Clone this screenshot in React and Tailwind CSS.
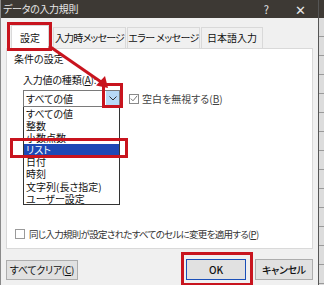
export default function App() {
  const items = ['すべての値', '整数', '小数点数', 'リスト', '日付', '時刻', '文字列(長さ指定)', 'ユーザー設定']

  return (
    <div className="relative flex w-[324px] h-[285px] overflow-hidden whitespace-nowrap bg-[#f0f0f0] font-['Noto_Sans_CJK_JP',sans-serif] [font-feature-settings:'palt'] text-[10px] leading-[12px] text-[#111]">
      {/* dialog */}
      <div className="flex flex-col w-[318px] h-full border-l border-[#8a8a8a]">
        {/* title bar */}
        <div className="flex items-center h-[18px] bg-[#3d3934] text-[#e8e8e8] pl-[2px] pr-[12px]">
          <span className="tracking-[-0.3px]">データの入力規則</span>
          <span className="ml-auto text-[11px]">?</span>
          <span className="ml-[26px] text-[13px] leading-[13px]">✕</span>
        </div>

        <div className="flex flex-col flex-1 px-[5px]">
          {/* tabs */}
          <div className="flex items-end h-[30px] pl-[5px]">
            <div className="flex items-center justify-center w-[38px] h-[24px] bg-white border border-b-0 border-[#d9d9d9] -mb-px z-10">設定</div>
            <div className="flex items-center justify-center w-[73px] h-[21px] ml-[4px] bg-[#f0f0f0] border border-b-0 border-[#d9d9d9] tracking-[-0.8px]">入力時メッセージ</div>
            <div className="flex items-center justify-center w-[73px] h-[21px] ml-[1px] bg-[#f0f0f0] border border-b-0 border-[#d9d9d9] tracking-[-0.6px]">エラー&nbsp;メッセージ</div>
            <div className="flex items-center justify-center w-[62px] h-[21px] ml-[1px] bg-[#f0f0f0] border border-b-0 border-[#d9d9d9]">日本語入力</div>
          </div>

          {/* panel */}
          <div className="flex flex-col h-[201px] bg-white border border-[#d9d9d9]">
            <div className="pl-[7px] pt-[4px]">条件の設定</div>
            <div className="pl-[16px] mt-[9px] tracking-[-0.2px]">
              入力値の種類(<span className="underline">A</span>):
            </div>
            <div className="flex items-start pl-[16px] mt-[4px]">
              <div className="flex flex-col w-[97px]">
                <div className="flex items-center h-[17px] border border-[#7a7a7a] pl-[2px]">
                  <span>すべての値</span>
                  <div className="ml-auto flex items-center justify-center w-[13px] h-full bg-[#b7daf7]">
                    <svg width="8" height="5" viewBox="0 0 8 5">
                      <path d="M0.5 0.5 L4 4 L7.5 0.5" fill="none" stroke="#333" strokeWidth="1" />
                    </svg>
                  </div>
                </div>
                <div className="flex flex-col h-[98px] border border-t-0 border-[#333] pt-[1px]">
                  {items.map((it) => (
                    <div
                      key={it}
                      className={`h-[12.1px] leading-[12.1px] pl-[2px] ${it === 'リスト' ? 'bg-[#1d48b5] text-white' : ''}`}
                    >
                      {it}
                    </div>
                  ))}
                </div>
              </div>
              <div className="flex items-center ml-[9px] h-[17px]">
                <div className="flex items-center justify-center w-[10px] h-[10px] border border-[#8a8a8a]">
                  <svg width="8" height="7" viewBox="0 0 8 7">
                    <path d="M0.8 3.6 L3 5.8 L7.2 0.8" fill="none" stroke="#777" strokeWidth="1" />
                  </svg>
                </div>
                <span className="ml-[3px] text-[#444]">
                  空白を無視する(<span className="underline">B</span>)
                </span>
              </div>
            </div>
            <div className="flex items-center pl-[8px] mt-auto mb-[8px]">
              <div className="w-[10px] h-[10px] border border-[#9a9a9a]" />
              <span className="ml-[4px] text-[9.5px] tracking-[-0.7px] text-[#333]">
                同じ入力規則が設定されたすべてのセルに変更を適用する(<span className="underline">P</span>)
              </span>
            </div>
          </div>

          {/* buttons */}
          <div className="flex items-center mt-[10px]">
            <div className="flex items-center justify-center w-[72px] h-[20px] bg-[#e1e1e1] border border-[#adadad] tracking-[-0.3px]">
              すべてクリア(<span className="underline">C</span>)
            </div>
            <div className="flex items-center justify-center w-[60px] h-[21px] ml-auto bg-[#e1e1e1] border border-[#1a4fb8] font-medium">OK</div>
            <div className="flex items-center justify-center w-[58px] h-[21px] ml-[9px] bg-[#e1e1e1] border border-[#adadad] font-medium tracking-[-0.3px]">キャンセル</div>
          </div>
        </div>
      </div>

      {/* spreadsheet behind */}
      <div className="flex flex-col w-[6px] h-full border-l border-[#555] bg-[#dcdcdc]">
        <div className="h-[18px] bg-[#3d3934]" />
        {Array.from({ length: 14 }).map((_, i) => (
          <div key={i} className="h-[19px] border-b border-[#9a9a9a]" />
        ))}
      </div>

      {/* red annotations */}
      <div className="absolute left-[7px] top-[22px] w-[45px] h-[29px] border-[3px] border-[#c8141e] z-20" />
      <div className="absolute left-[102px] top-[83px] w-[21px] h-[25px] border-[3px] border-[#c8141e] z-20" />
      <div className="absolute left-[10px] top-[138px] w-[118px] h-[20px] border-[3px] border-[#c8141e] z-20" />
      <div className="absolute left-[181px] top-[252px] w-[72px] h-[34px] border-[3px] border-[#c8141e] z-20" />
      <svg className="absolute left-0 top-0 z-20" width="324" height="285">
        <line x1="49" y1="46" x2="104" y2="84" stroke="#c8141e" strokeWidth="3" />
        <path d="M108 88 L96 85.5 L105 76 Z" fill="#c8141e" />
      </svg>
    </div>
  )
}
